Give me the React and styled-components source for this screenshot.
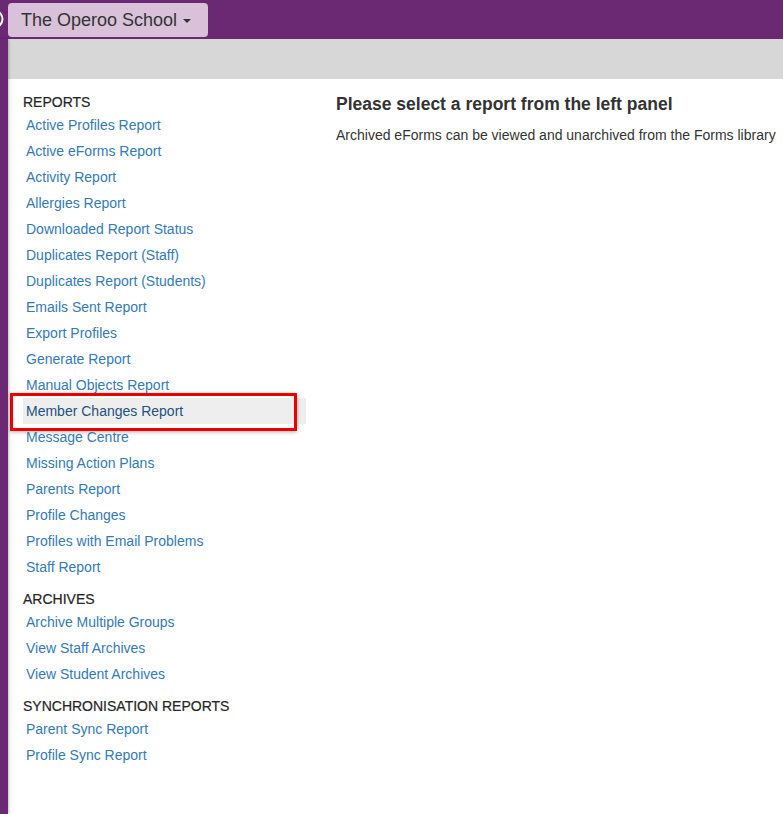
import React from "react";
import styled, { createGlobalStyle } from "styled-components";

const GlobalStyle = createGlobalStyle`
  html, body {
    margin: 0;
    padding: 0;
    background: #fff;
    font-family: "Liberation Sans", Arial, sans-serif;
    overflow: hidden;
  }
`;

const Page = styled.div`
  display: flex;
  flex-direction: column;
  min-height: 100vh;
`;

const TopBar = styled.div`
  display: flex;
  align-items: center;
  height: 39px;
  background: #6b2873;
`;

const Logo = styled.svg`
  width: 8px;
  height: 39px;
  flex-shrink: 0;
`;

const SchoolButton = styled.button`
  display: flex;
  align-items: center;
  height: 34px;
  width: 200px;
  margin-top: 1px;
  padding: 0 0 0 13px;
  border: none;
  border-radius: 4px;
  background: #d9c1da;
  color: #333;
  font-family: "Liberation Sans", Arial, sans-serif;
  font-size: 18px;
  cursor: pointer;
`;

const Caret = styled.span`
  display: inline-block;
  margin-left: 6px;
  margin-top: 2px;
  border-top: 4px solid #333;
  border-left: 4px solid transparent;
  border-right: 4px solid transparent;
`;

const Body = styled.div`
  display: flex;
  flex: 1;
`;

const Strip = styled.div`
  width: 8px;
  flex-shrink: 0;
  background: #6b2873;
  box-shadow: 1px 0 3px rgba(0, 0, 0, 0.25);
  position: relative;
  z-index: 1;
`;

const Main = styled.div`
  flex: 1;
  display: flex;
  flex-direction: column;
`;

const SubBar = styled.div`
  height: 40px;
  background: #d7d7d7;
`;

const Content = styled.div`
  display: flex;
`;

const Sidebar = styled.div`
  width: 283px;
  padding: 13px 15px 0;
  flex-shrink: 0;
`;

const SectionTitle = styled.div`
  font-size: 14px;
  line-height: 20px;
  color: #262626;
  text-transform: uppercase;
  -webkit-text-stroke: 0.2px #262626;
  margin-top: ${(p) => (p.$first ? "0" : "9px")};
`;

const LinkList = styled.ul`
  list-style: none;
  margin: 0;
  padding: 0;
`;

const Item = styled.li`
  position: relative;
  background: ${(p) => (p.$active ? "#eeeeee" : "transparent")};
`;

const Link = styled.a`
  display: block;
  padding: 3px 3px;
  font-size: 14px;
  line-height: 20px;
  color: ${(p) => (p.$active ? "#23527c" : "#337ab7")};
  text-decoration: none;
`;

const Highlight = styled.div`
  position: absolute;
  left: -13px;
  top: -5px;
  width: 281px;
  height: 32px;
  border: 3px solid #ee0000;
  box-shadow: 0 1px 4px rgba(0, 0, 0, 0.3);
  pointer-events: none;
`;

const Panel = styled.div`
  flex: 1;
  padding: 15px 15px 0;
`;

const PanelTitle = styled.h4`
  margin: 0;
  font-size: 17.5px;
  line-height: 20px;
  font-weight: bold;
  color: #333;
  white-space: nowrap;
`;

const PanelText = styled.p`
  margin: 11px 0 0;
  font-size: 14px;
  line-height: 20px;
  color: #333;
  white-space: nowrap;
`;

const sections = [
  {
    title: "Reports",
    links: [
      "Active Profiles Report",
      "Active eForms Report",
      "Activity Report",
      "Allergies Report",
      "Downloaded Report Status",
      "Duplicates Report (Staff)",
      "Duplicates Report (Students)",
      "Emails Sent Report",
      "Export Profiles",
      "Generate Report",
      "Manual Objects Report",
      "Member Changes Report",
      "Message Centre",
      "Missing Action Plans",
      "Parents Report",
      "Profile Changes",
      "Profiles with Email Problems",
      "Staff Report",
    ],
  },
  {
    title: "Archives",
    links: ["Archive Multiple Groups", "View Staff Archives", "View Student Archives"],
  },
  {
    title: "Synchronisation Reports",
    links: ["Parent Sync Report", "Profile Sync Report"],
  },
];

const ACTIVE = "Member Changes Report";

export default function App() {
  return (
    <Page>
      <GlobalStyle />
      <TopBar>
        <Logo viewBox="0 0 8 39">
          <circle cx="-6" cy="19" r="8.5" fill="none" stroke="#fff" strokeWidth="2" />
        </Logo>
        <SchoolButton>
          The Operoo School
          <Caret />
        </SchoolButton>
      </TopBar>
      <Body>
        <Strip />
        <Main>
          <SubBar />
          <Content>
            <Sidebar>
              {sections.map((s, i) => (
                <div key={s.title}>
                  <SectionTitle $first={i === 0}>{s.title}</SectionTitle>
                  <LinkList>
                    {s.links.map((l) => (
                      <Item key={l} $active={l === ACTIVE}>
                        <Link href="#" $active={l === ACTIVE}>
                          {l}
                        </Link>
                        {l === ACTIVE && <Highlight />}
                      </Item>
                    ))}
                  </LinkList>
                </div>
              ))}
            </Sidebar>
            <Panel>
              <PanelTitle>Please select a report from the left panel</PanelTitle>
              <PanelText>
                Archived eForms can be viewed and unarchived from the Forms library
              </PanelText>
            </Panel>
          </Content>
        </Main>
      </Body>
    </Page>
  );
}
